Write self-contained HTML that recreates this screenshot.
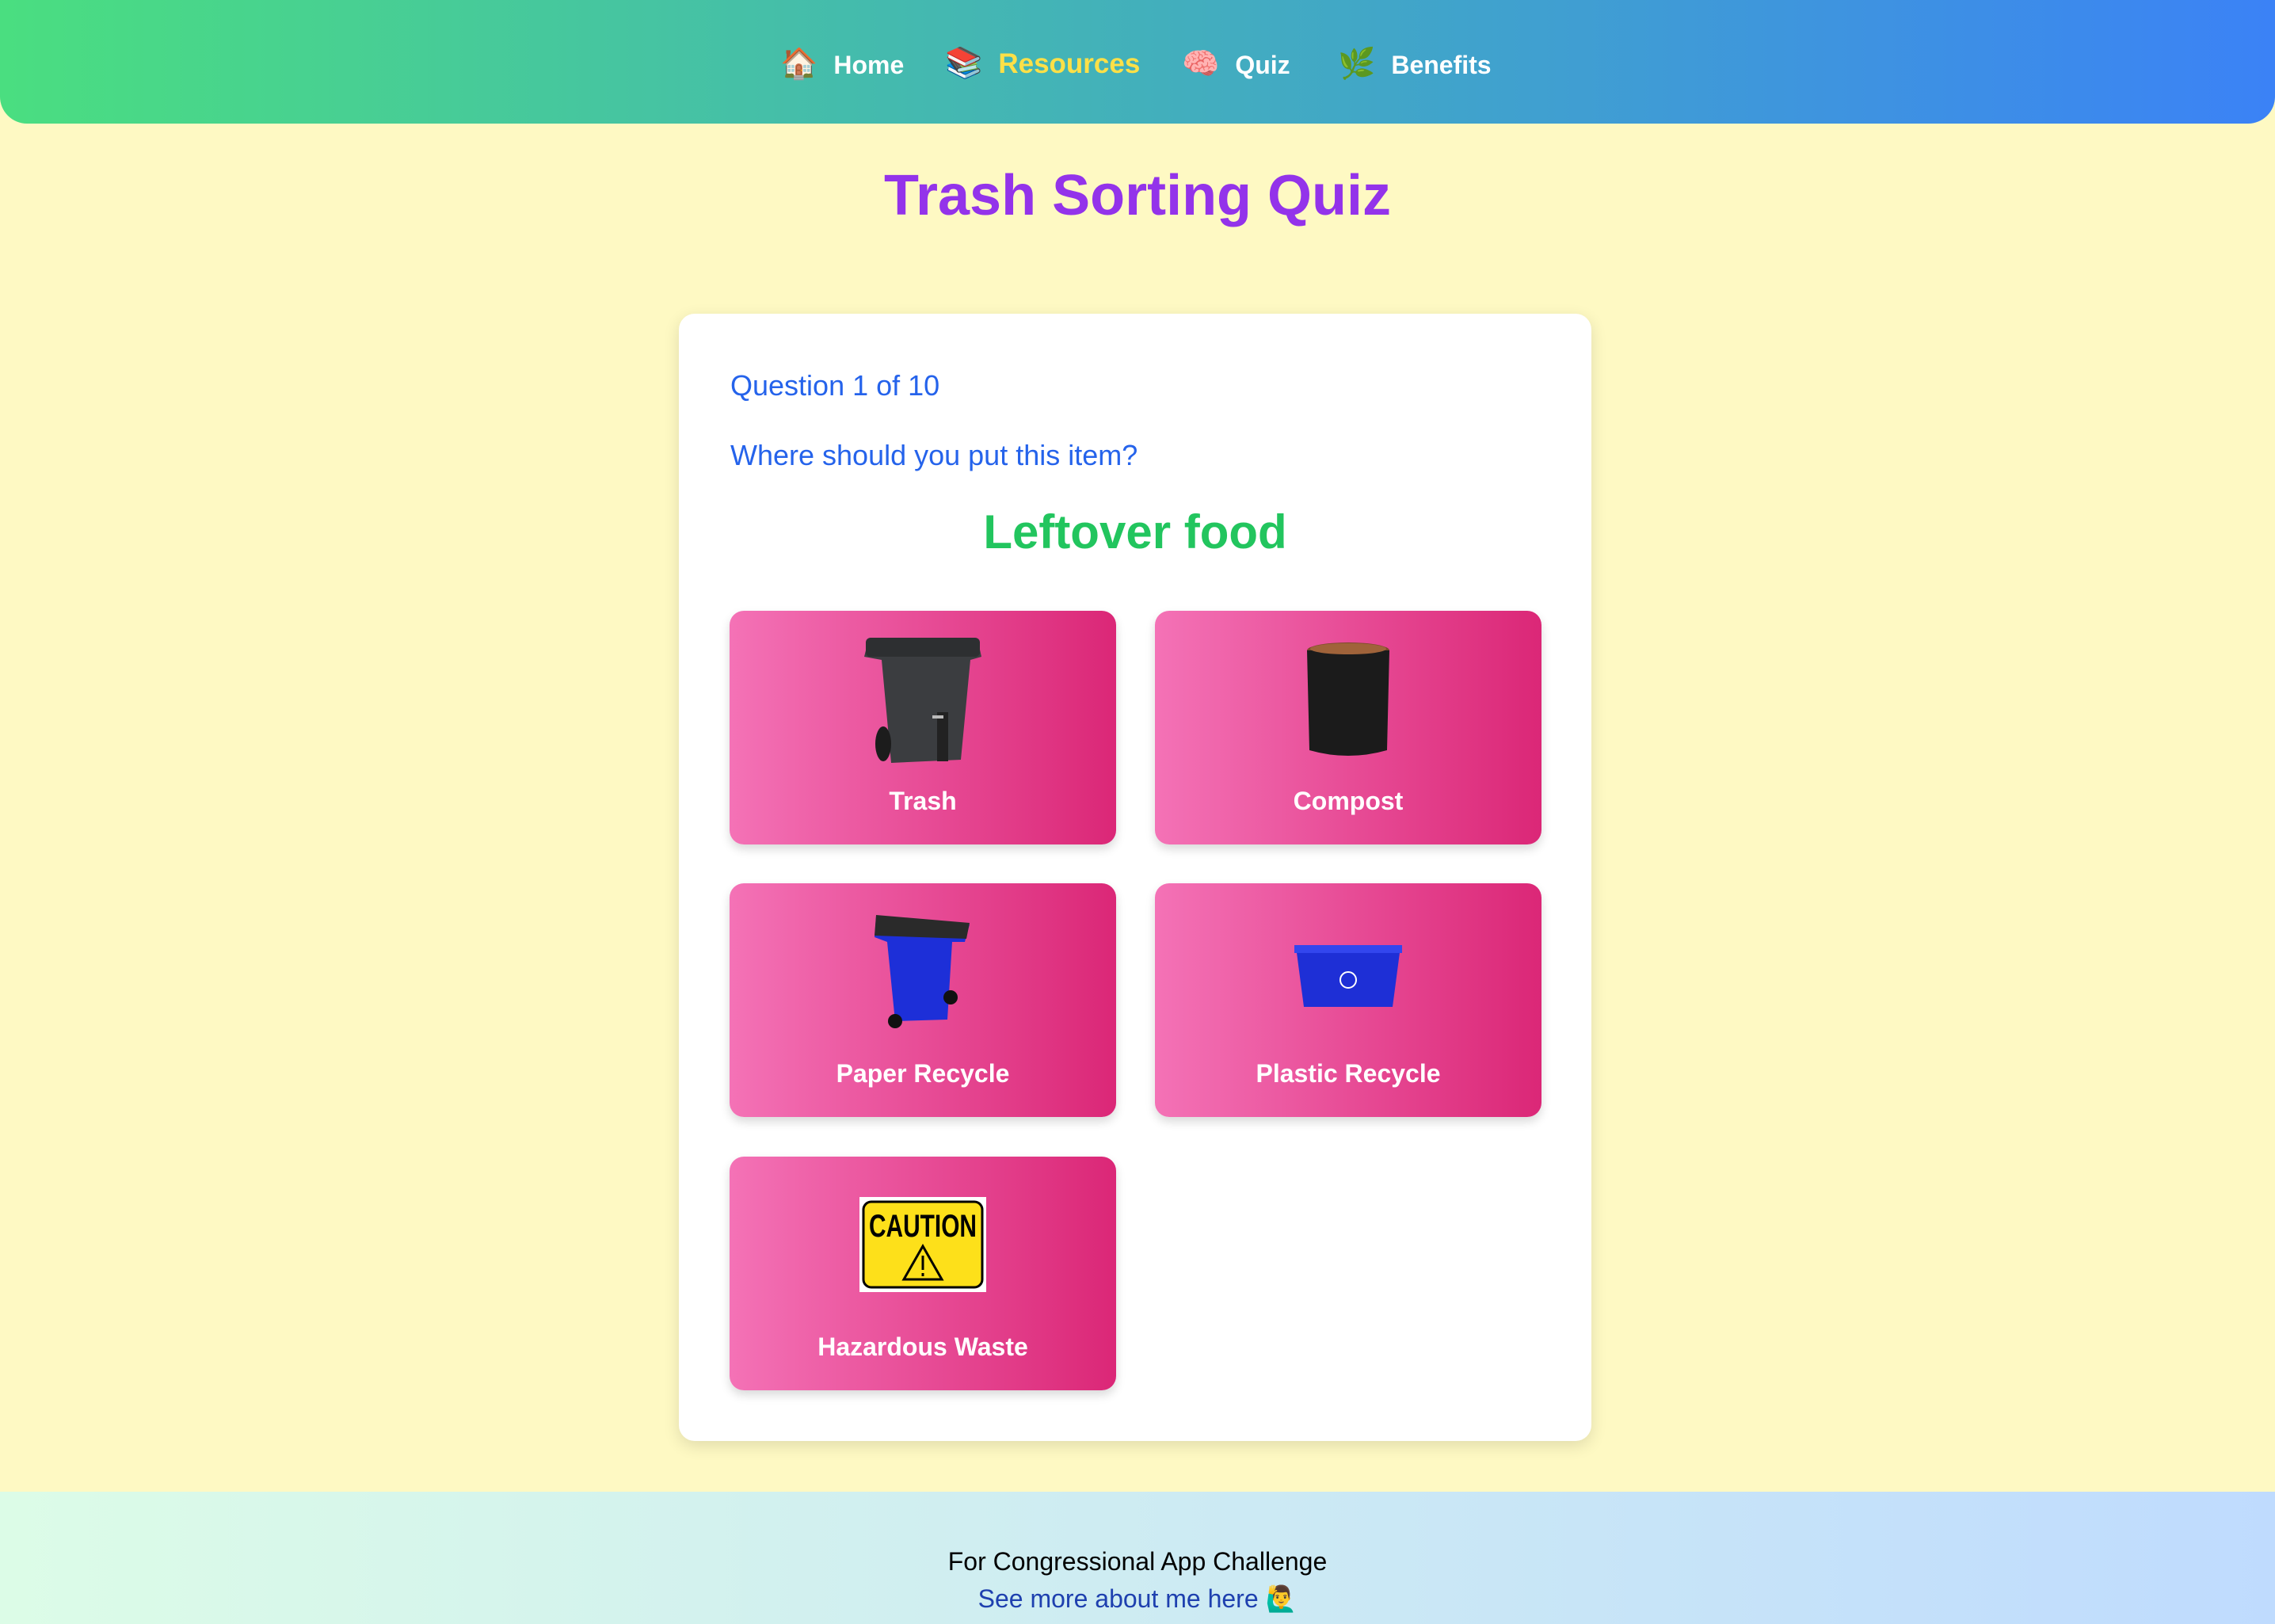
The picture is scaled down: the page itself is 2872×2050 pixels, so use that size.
<!DOCTYPE html>
<html><head><meta charset="utf-8"><style>
*{margin:0;padding:0;box-sizing:border-box}
body{width:2872px;height:2050px;background:#fef9c3;font-family:"Liberation Sans",Arial,sans-serif;position:relative;overflow:hidden}
nav{position:absolute;left:0;top:0;width:2872px;height:156px;background:linear-gradient(90deg,#4ade80,#3b82f6);border-radius:0 0 34px 34px;}
.ni{position:absolute;top:58px;font-size:32px;font-weight:bold;color:#fff;line-height:46px;white-space:nowrap}
.ni span{font-size:38px;margin-right:20px;font-family:"Noto Color Emoji","DejaVu Sans",sans-serif}
h1{position:absolute;top:200px;left:0;width:2872px;text-align:center;font-size:72px;color:#9333ea;font-weight:bold;line-height:94px}
.card{position:absolute;left:857px;top:396px;width:1152px;height:1423px;background:#fff;border-radius:20px;box-shadow:0 6px 20px rgba(0,0,0,.12)}
.q{position:absolute;left:65px;font-size:36px;color:#2563eb;line-height:40px}
.item{position:absolute;left:0;width:1152px;top:241px;text-align:center;font-size:60px;font-weight:bold;color:#22c55e;line-height:70px}
.b{position:absolute;width:488px;height:295px;border-radius:18px;background:linear-gradient(90deg,#f472b6,#db2777);box-shadow:0 6px 12px rgba(0,0,0,.15);color:#fff;font-weight:bold;font-size:32px;text-align:center}
.b .l{position:absolute;left:0;right:0;top:222px;line-height:36px}
.b svg{position:absolute;left:50%;transform:translateX(-50%)}
footer{position:absolute;left:0;top:1883px;width:2872px;height:167px;background:linear-gradient(90deg,#dcfce7,#bfdbfe)}
.f1{position:absolute;top:69px;left:0;width:100%;text-align:center;font-size:32px;color:#000;line-height:38px}
.f2{position:absolute;top:116px;left:0;width:100%;text-align:center;font-size:32px;color:#1e40af;line-height:38px}
</style></head><body>
<nav>
<div class="ni" style="left:985px"><span>🏠</span>Home</div>
<div class="ni" style="left:1193px;color:#fde047;font-size:35px;top:57px"><span>📚</span>Resources</div>
<div class="ni" style="left:1492px"><span>🧠</span>Quiz</div>
<div class="ni" style="left:1689px"><span>🌿</span>Benefits</div>
</nav>
<h1>Trash Sorting Quiz</h1>
<div class="card">
<div class="q" style="top:71px">Question 1 of 10</div>
<div class="q" style="top:159px">Where should you put this item?</div>
<div class="item">Leftover food</div>

<div class="b" style="left:64px;top:375px">
<svg style="top:28px" width="160" height="175" viewBox="0 0 160 175"><path d="M10 14 L150 12 L154 30 L140 34 L128 160 L40 164 L28 34 L6 30 Z" fill="#3b3d40"/><rect x="8" y="6" width="144" height="24" rx="6" fill="#2d2f31"/><ellipse cx="30" cy="140" rx="10" ry="22" fill="#1c1c1c"/><rect x="98" y="100" width="14" height="62" fill="#222"/><rect x="92" y="104" width="14" height="4" fill="#bbb"/></svg>
<div class="l">Trash</div></div>

<div class="b" style="left:601px;top:375px">
<svg style="top:38px" width="110" height="150" viewBox="0 0 110 150"><ellipse cx="55" cy="12" rx="52" ry="10" fill="#7a4a2a"/><path d="M3 12 L107 12 L104 138 Q55 152 6 138 Z" fill="#1b1b1b"/><ellipse cx="55" cy="10" rx="48" ry="7" fill="#a0633a"/></svg>
<div class="l">Compost</div></div>

<div class="b" style="left:64px;top:719px">
<svg style="top:34px" width="130" height="150" viewBox="0 0 130 150"><path d="M6 8 L124 18 L118 40 L102 40 L96 138 L30 140 L20 40 L4 34 Z" fill="#1d2fd8"/><path d="M6 6 L124 16 L120 36 L4 32 Z" fill="#2a2a2a"/><circle cx="30" cy="140" r="9" fill="#111"/><circle cx="100" cy="110" r="9" fill="#111"/></svg>
<div class="l">Paper Recycle</div></div>

<div class="b" style="left:601px;top:719px">
<svg style="top:70px" width="140" height="100" viewBox="0 0 140 100"><path d="M4 10 L136 10 L126 86 L14 86 Z" fill="#1e2fd6"/><rect x="2" y="8" width="136" height="10" fill="#3346ee"/><circle cx="70" cy="52" r="10" fill="none" stroke="#fff" stroke-width="2"/></svg>
<div class="l">Plastic Recycle</div></div>

<div class="b" style="left:64px;top:1064px">
<svg style="top:51px" width="160" height="120" viewBox="0 0 160 120"><rect width="160" height="120" fill="#fff"/><rect x="5" y="6" width="150" height="108" rx="10" fill="#fde01a" stroke="#000" stroke-width="3"/><text x="80" y="50" text-anchor="middle" font-family="Liberation Sans Narrow,Liberation Sans,sans-serif" font-weight="bold" font-size="40" textLength="136" lengthAdjust="spacingAndGlyphs">CAUTION</text><path d="M80 62 L104 104 L56 104 Z" fill="none" stroke="#000" stroke-width="3"/><rect x="78.5" y="74" width="3" height="18" fill="#000"/><rect x="78.5" y="96" width="3" height="4" fill="#000"/></svg>
<div class="l">Hazardous Waste</div></div>
</div>
<footer>
<div class="f1">For Congressional App Challenge</div>
<div class="f2">See more about me here 🙋‍♂️</div>
</footer>
</body></html>
